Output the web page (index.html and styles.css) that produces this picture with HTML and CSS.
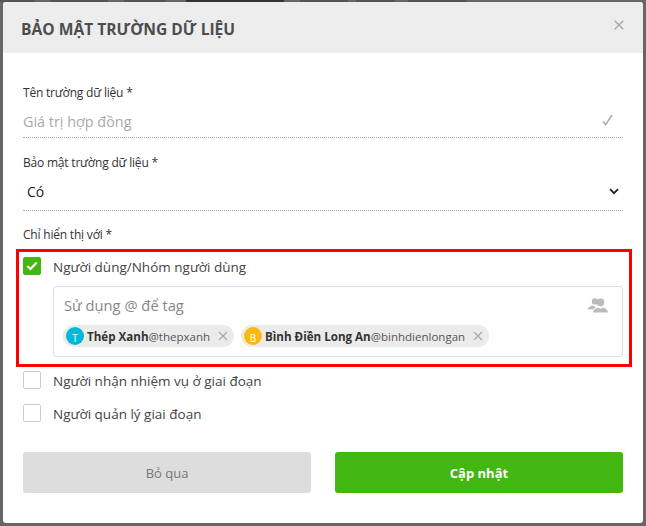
FILE: index.html
```html
<!DOCTYPE html>
<html lang="en">
<head>
  <meta charset="UTF-8">
  <title>Bảo mật trường dữ liệu</title>
  <link rel="stylesheet" href="styles.css">
</head>
<body>
  <div class="backdrop-strip"></div>
  <div class="modal">
    <div class="modal-header">
      <h1>BẢO MẬT TRƯỜNG DỮ LIỆU</h1>
      <svg class="close-icon" width="10" height="10" viewBox="0 0 10 10"><path d="M.7.7l8.600 8.600M9.300.7L.7 9.300" stroke="#a9a9a9" stroke-width="1.500" fill="none"/></svg>
    </div>
    <div class="modal-body">
      <div class="field field-name">
        <label>Tên trường dữ liệu *</label>
        <div class="line-input">
          <span class="muted-value">Giá trị hợp đồng</span>
          <svg width="11" height="12" viewBox="0 0 11 12"><path d="M1 7.5l2.6 3.2L10 1" stroke="#aaa" stroke-width="1.5" fill="none"/></svg>
        </div>
      </div>
      <div class="field field-secure">
        <label>Bảo mật trường dữ liệu *</label>
        <div class="line-input select-input">
          <span class="select-value">Có</span>
          <svg width="10" height="7" viewBox="0 0 10 7"><path d="M1 1.2l4 4 4-4" stroke="#222" stroke-width="1.8" fill="none"/></svg>
        </div>
      </div>
      <div class="field field-show">
        <label>Chỉ hiển thị với *</label>
      </div>
      <div class="highlight">
        <div class="check-row">
          <span class="checkbox checked">
            <svg width="12" height="10" viewBox="0 0 12 10"><path d="M1.3 5l3.2 3L10.7 1.6" stroke="#fff" stroke-width="2.2" fill="none"/></svg>
          </span>
          <span class="check-text">Người dùng/Nhóm người dùng</span>
        </div>
        <div class="tag-box">
          <div class="tag-input">
            <span>Sử dụng @ để tag</span>
            <svg width="20" height="16" viewBox="0 0 20 16"><g fill="#bbb"><circle cx="7" cy="4.400" r="3.200"/><path d="M0 12.500c0-2.600 2.800-3.600 4.600-4l2 1 1 .5-2.400 2.500z"/><circle cx="12.500" cy="5.400" r="3.800"/><path d="M5 15.500c0-3.200 3.500-4.500 5-5l2.500 1.400 2.500-1.400c1.500.5 5 1.800 5 5z"/></g></svg>
          </div>
          <div class="chips">
            <span class="chip">
              <span class="avatar avatar-t">T</span>
              <b>Thép Xanh</b><span class="chip-tag">@thepxanh</span>
              <svg class="chip-x" width="10" height="10" viewBox="0 0 10 10"><path d="M1 1l8 8M9 1l-8 8" stroke="#aaa" stroke-width="1.3" fill="none"/></svg>
            </span>
            <span class="chip">
              <span class="avatar avatar-b">B</span>
              <b>Bình Điền Long An</b><span class="chip-tag">@binhdienlongan</span>
              <svg class="chip-x" width="10" height="10" viewBox="0 0 10 10"><path d="M1 1l8 8M9 1l-8 8" stroke="#aaa" stroke-width="1.3" fill="none"/></svg>
            </span>
          </div>
        </div>
      </div>
      <div class="check-row plain-row">
        <span class="checkbox"></span>
        <span class="check-text">Người nhận nhiệm vụ ở giai đoạn</span>
      </div>
      <div class="check-row plain-row">
        <span class="checkbox"></span>
        <span class="check-text">Người quản lý giai đoạn</span>
      </div>
      <div class="actions">
        <button class="btn btn-cancel">Bỏ qua</button>
        <button class="btn btn-save">Cập nhật</button>
      </div>
    </div>
  </div>
</body>
</html>
```

FILE: styles.css
```css
html, body {
  height: 100%;
}
body {
  margin: 0;
  background: #666;
  font-family: "Open Sans", "Noto Sans", sans-serif;
  color: #444;
  overflow: hidden;
}
/* bottoms of the page text that shows above the modal */
.backdrop-strip {
  height: 2px;
  background: linear-gradient(90deg,
    #555 0, #555 34px, #666 34px, #666 50px,
    #555 50px, #555 108px, #666 108px, #666 124px,
    #555 124px, #555 166px, #666 166px, #666 186px,
    #333 186px, #333 284px, #666 284px, #666 300px,
    #555 300px, #555 348px, #666 348px, #666 356px,
    #555 356px, #555 395px, #666 395px, #666 408px,
    #555 408px, #555 466px, #666 466px);
}
.modal {
  margin-left: 3px;
  width: 640px;
  height: 521px;
  background: #fff;
  border-radius: 3px;
  overflow: hidden;
}
.modal-header {
  height: 51px;
  background: #ededed;
  display: flex;
  align-items: flex-start;
  justify-content: space-between;
  padding: 0 19px 0 18px;
}
.modal-header h1 {
  margin: 15px 0 0;
  font-size: 15.6px;
  line-height: 24px;
  font-weight: 700;
  color: #4d4d4d;
}
.close-icon {
  margin-top: 18px;
}
.modal-body {
  padding: 0 20px;
}
label {
  display: block;
  font-size: 12px;
  line-height: 18px;
  letter-spacing: -0.2px;
  color: #333;
}
.field-name {
  padding-top: 31px;
}
.field-secure {
  padding-top: 16px;
}
.field-show {
  padding-top: 15px;
}
.line-input {
  height: 35px;
  border-bottom: 1px dotted #aaa;
  display: flex;
  align-items: center;
  justify-content: space-between;
  padding-right: 10px;
  font-size: 14.4px;
}
.muted-value {
  padding-top: 4px;
  color: #a9a9a9;
}
.select-input {
  height: 38px;
  padding-left: 4px;
  padding-right: 4px;
  font-size: 14px;
}
.select-value {
  color: #222;
}
.highlight {
  margin: 5px -9px 0 -7px;
  padding: 5px 6px 7px 4px;
  border: 3px solid #f00;
}
.check-row {
  display: flex;
  align-items: center;
  gap: 12px;
  height: 18px;
  font-size: 13.5px;
  color: #444;
}
.check-text {
  padding-top: 2px;
}
.checkbox {
  flex: none;
  box-sizing: border-box;
  width: 18px;
  height: 18px;
  border: 1px solid #ccc;
  border-radius: 2px;
  background: #fff;
  display: flex;
  align-items: center;
  justify-content: center;
}
.checkbox.checked {
  background: #42b712;
  border-color: #42b712;
}
.tag-box {
  margin: 11px 0 0 30px;
  height: 71px;
  box-sizing: border-box;
  border: 1px solid #ddd;
  border-radius: 3px;
  padding: 0 9px 0 10px;
}
.tag-input {
  height: 35px;
  padding-bottom: 3px;
  display: flex;
  align-items: center;
  justify-content: space-between;
  padding-right: 5px;
  font-size: 14.7px;
  color: #888;
}
.chips {
  display: flex;
  gap: 7px;
  margin-left: -1px;
}
.chip {
  height: 22px;
  display: flex;
  align-items: center;
  padding: 0 5px 0 3px;
  background: #ebebeb;
  border-radius: 11px;
  color: #555;
  white-space: nowrap;
}
.chip b {
  margin-left: 3px;
  font-size: 11.6px;
  color: #333;
}
.chip-tag {
  font-size: 11.5px;
}
.chip-x {
  margin: 0 1px 0 8px;
}
.avatar {
  width: 18px;
  height: 18px;
  border-radius: 50%;
  display: flex;
  align-items: flex-end;
  justify-content: center;
  font-size: 10px;
  line-height: 14px;
  color: #fff;
}
.avatar-t {
  background: #00b9d8;
}
.avatar-b {
  background: #fdb913;
}
.plain-row {
  margin-top: 15px;
}
.highlight + .plain-row {
  margin-top: 4px;
}
.actions {
  display: flex;
  justify-content: space-between;
  margin-top: 30px;
}
.btn {
  width: 288px;
  height: 41px;
  border: none;
  border-radius: 3px;
  font-family: inherit;
  font-size: 13px;
}
.btn-cancel {
  background: #ddd;
  color: #777;
}
.btn-save {
  background: #42b712;
  color: #fff;
  font-weight: 700;
}
```
